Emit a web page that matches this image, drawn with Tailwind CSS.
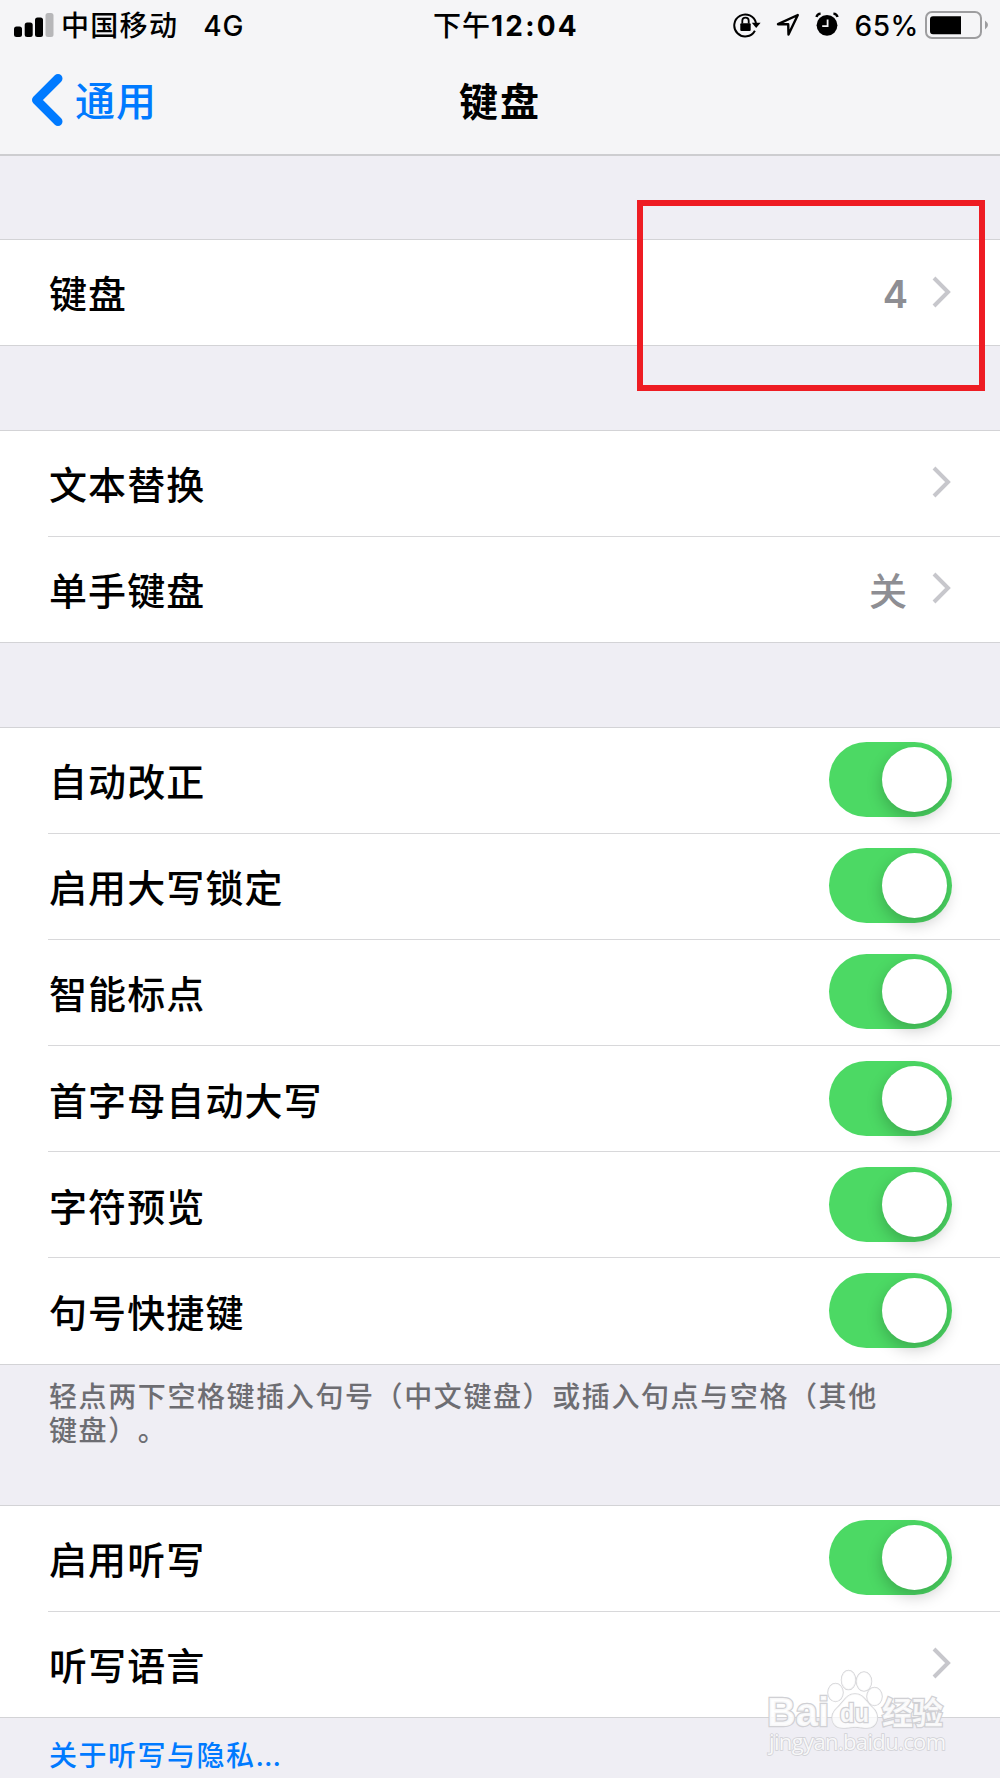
<!DOCTYPE html>
<html lang="zh-CN">
<head>
    <meta charset="UTF-8">
    <meta name="viewport" content="width=device-width, initial-scale=1.0">
    <title>键盘</title>
    <script src="https://cdn.jsdelivr.net/npm/@tailwindcss/browser@4"></script>
</head>
<body class="bg-[#efeef4] text-black font-['Inter','Noto_Sans_CJK_SC',sans-serif]">
    <div class="relative w-[1000px] h-[1778px] overflow-hidden">

        <header class="h-[156px] bg-[#f5f5f7] border-b-2 border-[#cdcdd0]">
            <!-- status bar -->
            <div class="grid grid-cols-3 h-[51px] items-center text-[28px] font-medium leading-[50px]">
                <div class="flex items-center pl-[14px] whitespace-nowrap">
                    <svg class="w-10 h-[26px] -mt-0.5" viewBox="0 0 40 26">
                        <rect x="0" y="14.5" width="8" height="10.5" rx="2.5"/>
                        <rect x="10.7" y="10.5" width="8" height="14.5" rx="2.5"/>
                        <rect x="21" y="5.5" width="8" height="19.5" rx="2.5"/>
                        <rect x="31.5" y="1" width="8" height="24" rx="2.5" fill="#b7b7b9"/>
                    </svg>
                    <span class="ml-[7px] tracking-[1.3px]">中国移动</span>
                    <span class="ml-[25px] tracking-[1px]">4G</span>
                </div>
                <div class="text-center whitespace-nowrap tracking-[1px] pl-[12px]">下午<span class="font-bold tracking-[2.2px]">12:04</span></div>
                <div class="flex items-center justify-end pr-3">
                    <svg class="w-7 h-[26px] -mt-0.5" viewBox="0 0 28 26">
                        <path d="M21.9 18.8A11 11 0 1 1 23 11" fill="none" stroke="#000" stroke-width="2"/>
                        <path d="M18.8 10.8h8.8l-4.4 5.2z"/>
                        <rect x="7.3" y="11.2" width="10.4" height="7.8" rx="1"/>
                        <path d="M9.3 11.5V8.8a3.2 3.2 0 0 1 6.4 0v2.7" fill="none" stroke="#000" stroke-width="1.8"/>
                    </svg>
                    <svg class="w-6 h-6 ml-[15px] -mt-0.5" viewBox="0 0 24 24">
                        <path d="M21.8 2L2 11.2h10.2l.3 10.3z" fill="none" stroke="#000" stroke-width="2.4" stroke-linejoin="round"/>
                    </svg>
                    <svg class="w-6 h-[26px] ml-[15px] -mt-0.5" viewBox="0 0 24 26">
                        <circle cx="12" cy="13.3" r="10.4"/>
                        <path d="M1.5 5Q2.200 1.800 5.600 1.600M22.500 5Q21.800 1.800 18.400 1.600" fill="none" stroke="#000" stroke-width="2.400"/>
                        <path d="M12.6 7.6v6.600H7.2" fill="none" stroke="#f5f5f7" stroke-width="1.8"/>
                    </svg>
                    <span class="ml-[15px] tracking-[0.6px]">65%</span>
                    <svg class="w-[63px] h-7 ml-[6px] -mt-0.5" viewBox="0 0 63 28">
                        <rect x="1" y="1" width="55" height="26" rx="6" fill="none" stroke="#9d9d9f" stroke-width="2"/>
                        <path d="M8 5.2h28v18H8a3 3 0 0 1-3-3v-12a3 3 0 0 1 3-3z"/>
                        <path d="M60 9.5q6 4.500 0 9z" fill="#9d9d9f"/>
                    </svg>
                </div>
            </div>
            <!-- nav bar -->
            <div class="grid grid-cols-3 h-[102px] items-center">
                <a class="flex items-center pl-[31px] text-[#007aff]">
                    <svg class="w-[32px] h-[52px] -mt-1" viewBox="0 0 32 52">
                        <path d="M27 4.500L5.500 26L27 47.500" fill="none" stroke="#007aff" stroke-width="9" stroke-linecap="round" stroke-linejoin="round"/>
                    </svg>
                    <span class="ml-3 text-[40px] leading-[50px] tracking-[1px] font-medium">通用</span>
                </a>
                <h1 class="text-center text-[39px] leading-[50px] tracking-[2px] font-bold">键盘</h1>
            </div>
        </header>

        <main class="text-[38px] leading-[50px] font-medium tracking-[1.1px]">
            <section class="mt-[83px] h-[107px] bg-white border-y border-[#d3d3d6]">
                <div class="flex h-full items-center pl-12 pr-12">
                    <span class="ml-px mt-[3px]">键盘</span>
                    <span class="ml-auto mt-[3px] text-[#8e8e93] tracking-normal font-semibold">4</span>
                    <svg class="ml-6 -mt-0.5 w-5 h-8" viewBox="0 0 20 32"><path d="M2 2l14 14L2 30" fill="none" stroke="#c7c7cc" stroke-width="4"/></svg>
                </div>
            </section>

            <section class="mt-[84px] h-[213px] bg-white border-y border-[#d3d3d6] grid grid-rows-2">
                <div class="ml-12 flex items-center pr-12 border-b border-[#d8d8da]">
                    <span class="ml-px mt-1">文本替换</span>
                    <svg class="ml-auto -mt-0.5 w-5 h-8" viewBox="0 0 20 32"><path d="M2 2l14 14L2 30" fill="none" stroke="#c7c7cc" stroke-width="4"/></svg>
                </div>
                <div class="ml-12 flex items-center pr-12">
                    <span class="ml-px mt-1">单手键盘</span>
                    <span class="ml-auto mt-1 text-[#8e8e93] tracking-normal">关</span>
                    <svg class="ml-[25px] -mt-0.5 w-5 h-8" viewBox="0 0 20 32"><path d="M2 2l14 14L2 30" fill="none" stroke="#c7c7cc" stroke-width="4"/></svg>
                </div>
            </section>

            <section class="mt-[84px] h-[638px] bg-white border-y border-[#d3d3d6] grid grid-rows-6">
                <div class="ml-12 flex items-center justify-between pr-12 border-b border-[#d8d8da]">
                    <span class="ml-px mt-[3px]">自动改正</span>
                    <div class="flex items-center justify-end w-[123px] h-[75px] -mt-0.5 pr-[5px] rounded-full bg-[#4cd964]">
                        <div class="size-[65px] rounded-full bg-white shadow-[0_6px_16px_rgba(0,0,0,0.22)]"></div>
                    </div>
                </div>
                <div class="ml-12 flex items-center justify-between pr-12 border-b border-[#d8d8da]">
                    <span class="ml-px mt-[3px]">启用大写锁定</span>
                    <div class="flex items-center justify-end w-[123px] h-[75px] -mt-0.5 pr-[5px] rounded-full bg-[#4cd964]">
                        <div class="size-[65px] rounded-full bg-white shadow-[0_6px_16px_rgba(0,0,0,0.22)]"></div>
                    </div>
                </div>
                <div class="ml-12 flex items-center justify-between pr-12 border-b border-[#d8d8da]">
                    <span class="ml-px mt-[3px]">智能标点</span>
                    <div class="flex items-center justify-end w-[123px] h-[75px] -mt-0.5 pr-[5px] rounded-full bg-[#4cd964]">
                        <div class="size-[65px] rounded-full bg-white shadow-[0_6px_16px_rgba(0,0,0,0.22)]"></div>
                    </div>
                </div>
                <div class="ml-12 flex items-center justify-between pr-12 border-b border-[#d8d8da]">
                    <span class="ml-px mt-1">首字母自动大写</span>
                    <div class="flex items-center justify-end w-[123px] h-[75px] -mt-px pr-[5px] rounded-full bg-[#4cd964]">
                        <div class="size-[65px] rounded-full bg-white shadow-[0_6px_16px_rgba(0,0,0,0.22)]"></div>
                    </div>
                </div>
                <div class="ml-12 flex items-center justify-between pr-12 border-b border-[#d8d8da]">
                    <span class="ml-px mt-1">字符预览</span>
                    <div class="flex items-center justify-end w-[123px] h-[75px] -mt-px pr-[5px] rounded-full bg-[#4cd964]">
                        <div class="size-[65px] rounded-full bg-white shadow-[0_6px_16px_rgba(0,0,0,0.22)]"></div>
                    </div>
                </div>
                <div class="ml-12 flex items-center justify-between pr-12">
                    <span class="ml-px mt-1">句号快捷键</span>
                    <div class="flex items-center justify-end w-[123px] h-[75px] -mt-0.5 pr-[5px] rounded-full bg-[#4cd964]">
                        <div class="size-[65px] rounded-full bg-white shadow-[0_6px_16px_rgba(0,0,0,0.22)]"></div>
                    </div>
                </div>
            </section>

            <p class="h-[140px] pt-[15px] pl-[49px] text-[28px] leading-[34px] tracking-[1.6px] font-medium text-[#6d6d72] whitespace-nowrap [text-spacing-trim:space-all]">轻点两下空格键插入句号（中文键盘）或插入句点与空格（其他<br>键盘）。</p>

            <section class="h-[213px] bg-white border-y border-[#d3d3d6] grid grid-rows-2">
                <div class="ml-12 flex items-center justify-between pr-12 border-b border-[#d8d8da]">
                    <span class="ml-px mt-[3px]">启用听写</span>
                    <div class="flex items-center justify-end w-[123px] h-[75px] -mt-0.5 pr-[5px] rounded-full bg-[#4cd964]">
                        <div class="size-[65px] rounded-full bg-white shadow-[0_6px_16px_rgba(0,0,0,0.22)]"></div>
                    </div>
                </div>
                <div class="ml-12 flex items-center justify-between pr-12">
                    <span class="ml-px mt-1">听写语言</span>
                    <svg class="-mt-0.5 w-5 h-8" viewBox="0 0 20 32"><path d="M2 2l14 14L2 30" fill="none" stroke="#c7c7cc" stroke-width="4"/></svg>
                </div>
            </section>

            <a class="block pt-[21px] pl-[49px] text-[28px] leading-[34px] tracking-[1.5px] font-medium text-[#007aff]">关于听写与隐私<span class="tracking-[0px]">...</span></a>
        </main>

        <!-- highlight box -->
        <div class="absolute left-[637px] top-[200px] w-[348px] h-[191px] border-[6px] border-[#ee1c23]"></div>

        <!-- watermark -->
        <svg class="absolute left-[760px] top-[1660px] w-[200px] h-[110px]" viewBox="0 0 200 110">
            <g fill="#fff" fill-opacity="0.75" stroke="#d4d4d7" stroke-width="1.500" paint-order="stroke">
                <ellipse cx="75.500" cy="32.500" rx="7.500" ry="9"/>
                <ellipse cx="88.500" cy="20" rx="7" ry="9.500"/>
                <ellipse cx="104" cy="21.500" rx="7.500" ry="9.500"/>
                <ellipse cx="114.500" cy="36.500" rx="7.500" ry="9"/>
                <path d="M95 34c9 0 11 8 17 13 9 8 6 21-5 21-6 0-8-1-12-1s-6 1-12 1c-12 0-14-13-6-20 7-6 9-14 18-14z"/>
            </g>
            <g fill="#fff" fill-opacity="0.85" stroke="#d0d0d4" stroke-width="2.500" paint-order="stroke" font-family="Liberation Sans, sans-serif">
                <text x="7" y="66" font-size="40" font-weight="700" textLength="62" lengthAdjust="spacingAndGlyphs">Bai</text>
                <text x="80" y="62" font-size="25" font-weight="700" textLength="29" lengthAdjust="spacingAndGlyphs">du</text>
                <text x="122" y="64" font-size="31" font-weight="700" textLength="61" font-family="Noto Sans CJK SC, sans-serif">经验</text>
                <text x="9" y="90" font-size="22" textLength="177" stroke-width="1.500" font-family="Open Sans, sans-serif">jingyan.baidu.com</text>
            </g>
        </svg>
    </div>
</body>
</html>
